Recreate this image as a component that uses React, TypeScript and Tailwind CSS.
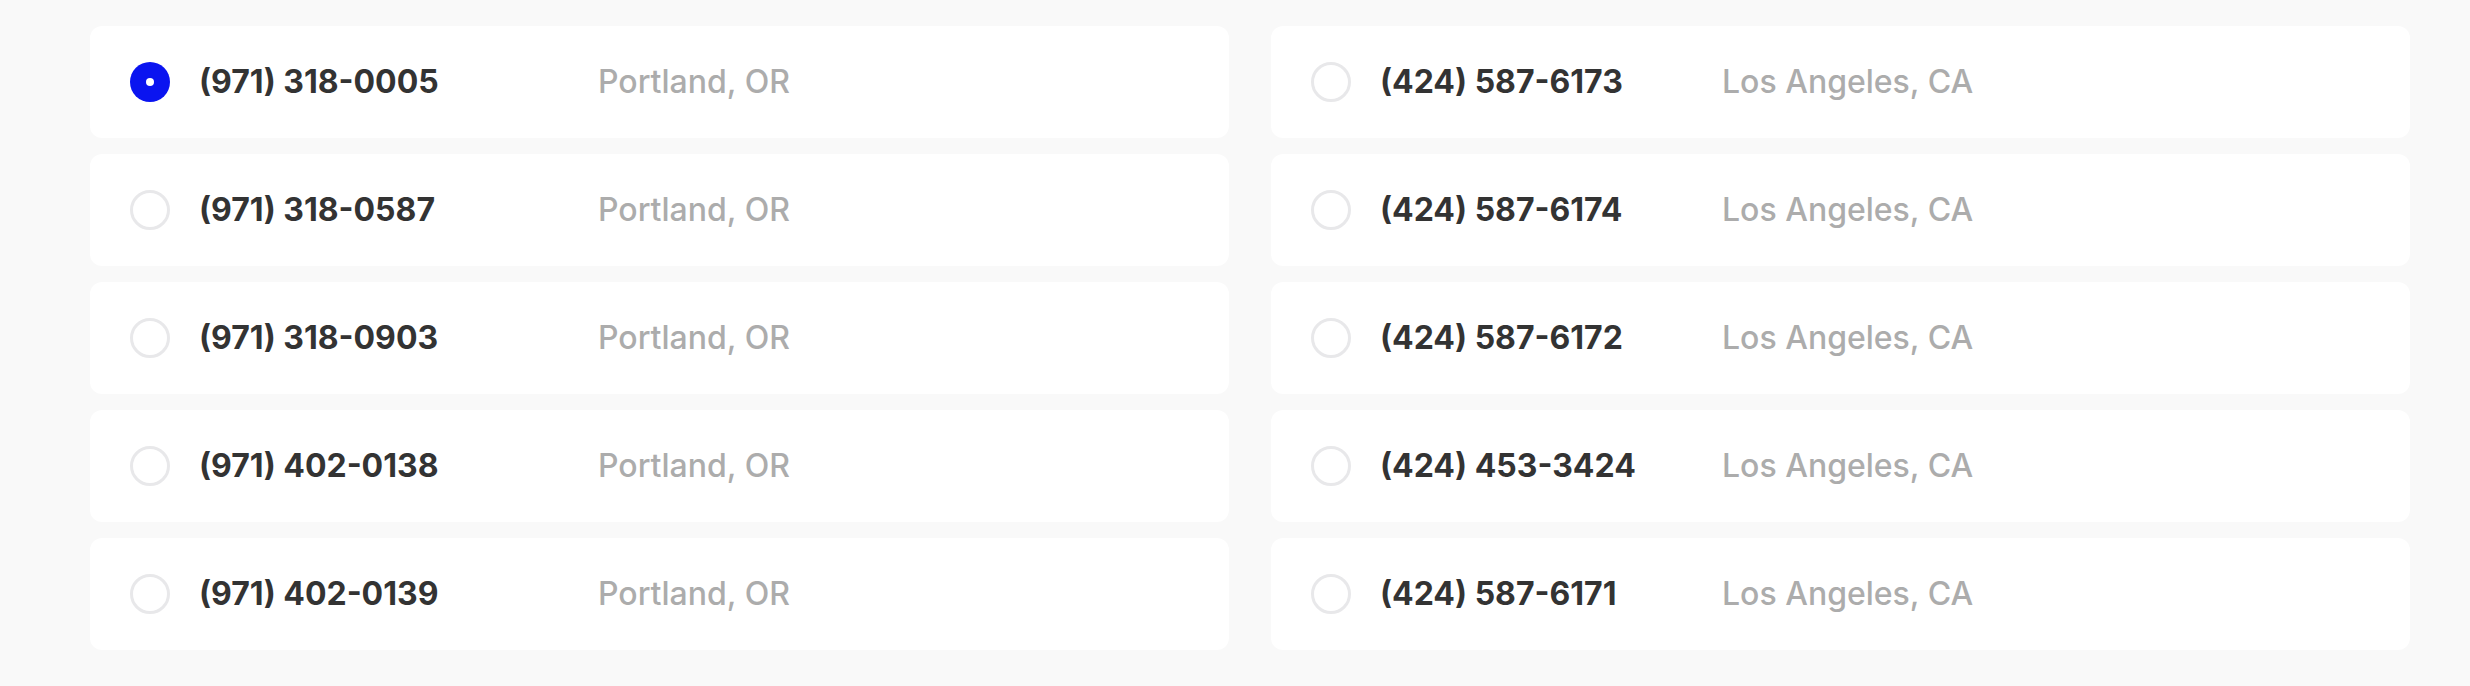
import React from "react";

type Numero = {
  telefone: string;
  local: string;
  selecionado?: boolean;
};

const esquerda: Numero[] = [
  { telefone: "(971) 318-0005", local: "Portland, OR", selecionado: true },
  { telefone: "(971) 318-0587", local: "Portland, OR" },
  { telefone: "(971) 318-0903", local: "Portland, OR" },
  { telefone: "(971) 402-0138", local: "Portland, OR" },
  { telefone: "(971) 402-0139", local: "Portland, OR" },
];

const direita: Numero[] = [
  { telefone: "(424) 587-6173", local: "Los Angeles, CA" },
  { telefone: "(424) 587-6174", local: "Los Angeles, CA" },
  { telefone: "(424) 587-6172", local: "Los Angeles, CA" },
  { telefone: "(424) 453-3424", local: "Los Angeles, CA" },
  { telefone: "(424) 587-6171", local: "Los Angeles, CA" },
];

const Radio: React.FC<{ ativo?: boolean }> = ({ ativo }) =>
  ativo ? (
    <span className="flex h-10 w-10 shrink-0 items-center justify-center rounded-full bg-[#0a14f0]">
      <span className="h-2 w-2 rounded-full bg-white" />
    </span>
  ) : (
    <span className="h-10 w-10 shrink-0 rounded-full border-[3px] border-[#e8e8ea]" />
  );

const Linha: React.FC<{ item: Numero; larguraTelefone: string }> = ({
  item,
  larguraTelefone,
}) => (
  <div className="flex h-[112px] items-center rounded-xl bg-white pl-10">
    <Radio ativo={item.selecionado} />
    <span
      className={`ml-[29px] shrink-0 text-[32px] font-bold text-[#333333] ${larguraTelefone}`}
    >
      {item.telefone}
    </span>
    <span className="text-[32px] font-medium text-[#acacac]">{item.local}</span>
  </div>
);

export default function App() {
  return (
    <div
      className="flex h-[686px] w-[2470px] gap-[42px] bg-[#f9f9f9] pl-[90px] pr-[60px] pt-[26px]"
      style={{ fontFamily: "Inter, 'Liberation Sans', sans-serif" }}
    >
      <div className="flex flex-1 flex-col gap-4">
        {esquerda.map((item) => (
          <Linha key={item.telefone} item={item} larguraTelefone="w-[399px]" />
        ))}
      </div>
      <div className="flex flex-1 flex-col gap-4">
        {direita.map((item) => (
          <Linha key={item.telefone} item={item} larguraTelefone="w-[342px]" />
        ))}
      </div>
    </div>
  );
}
